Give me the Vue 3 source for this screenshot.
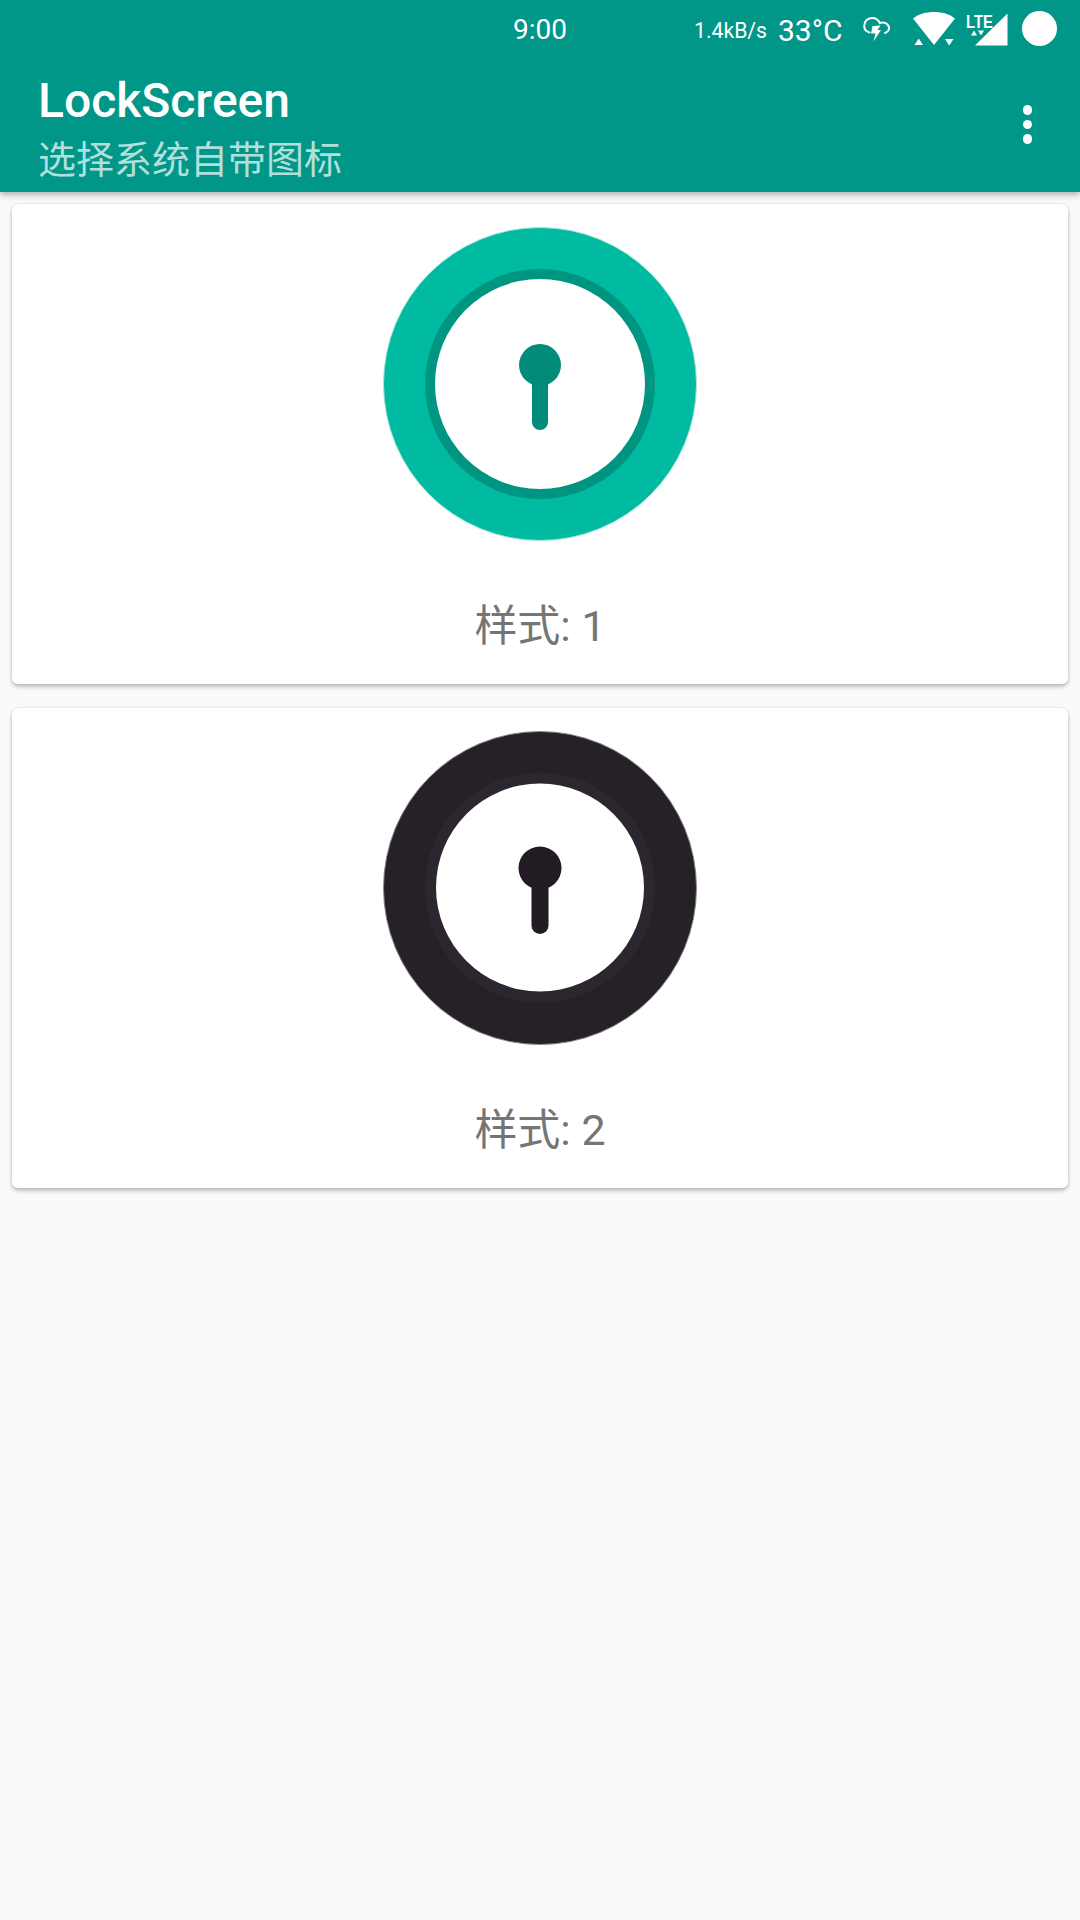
<script setup>
const styles = [
  { id: 1, outer: '#00bba1', edge: '#a8e4da', ring: '#009580', hole: '#008c78', ringR: 115, whiteR: 105, cy: 160, headY: 141, headR: 21, stemW: 16 },
  { id: 2, outer: '#262027', edge: '#8d8790', ring: '#2c272e', hole: '#231c24', ringR: 115, whiteR: 104, cy: 159.5, headY: 140, headR: 21.5, stemW: 17 }
]
</script>

<template>
  <div class="screen">
    <header class="appbar">
      <div class="status">
        <span></span>
        <span class="time">9:00</span>
        <div class="status-right">
          <span class="speed">1.4kB/s</span>
          <span class="temp">33°C</span>
          <svg class="cloud" width="28" height="26" viewBox="0 0 28 26">
            <path d="M6.500 16.500C3 15.500 1.200 13 1.200 10C1.200 5.500 4.500 2 9 2C12.500 2 15.500 4 16.800 7C17.500 6.800 18.500 6.600 19.500 6.600C23.500 6.600 26 9.200 26 12C26 14.500 24.500 16 22 17" fill="none" stroke="#fff" stroke-width="2" stroke-linecap="round" />
            <path d="M17.500 9.500L9.500 10L8 17.500H12.500L10.500 25.500L18 14H14.500Z" fill="#fff" />
          </svg>
          <svg class="wifi" width="46" height="36" viewBox="0 0 46 36">
            <path d="M1 7.500C6.500 3 14 1 22 1C30 1 37.500 3 43 7.500L22 34Z" fill="#fff" />
            <path d="M2.500 34L6.800 27.500L11 34Z" fill="#fff" />
            <path d="M33 28H41.500L37.200 34.500Z" fill="#fff" />
          </svg>
          <div class="cell">
            <svg width="42" height="33" viewBox="0 0 42 33">
              <path d="M41.500 0.500V32.500H9Z" fill="#fff" />
              <path d="M5 22.500L8 17.500L11 22.500Z" fill="#fff" />
              <path d="M12 17.500H18L15 22.500Z" fill="#fff" />
            </svg>
            <span class="lte">LTE</span>
          </div>
          <span class="battery"></span>
        </div>
      </div>
      <div class="toolbar">
        <div class="titles">
          <div class="title">LockScreen</div>
          <div class="subtitle">选择系统自带图标</div>
        </div>
        <div class="more">
          <i></i><i></i><i></i>
        </div>
      </div>
    </header>

    <main class="list">
      <section v-for="s in styles" :key="s.id" class="card">
        <svg class="logo" width="320" height="320" viewBox="0 0 320 320">
          <circle cx="160" cy="160" r="156.500" :fill="s.outer" :stroke="s.edge" stroke-width="1" />
          <circle cx="160" :cy="s.cy" :r="s.ringR" :fill="s.ring" />
          <circle cx="160" :cy="s.cy" :r="s.whiteR" fill="#fff" />
          <circle cx="160" :cy="s.headY" :r="s.headR" :fill="s.hole" />
          <rect :x="160 - s.stemW / 2" :y="s.headY" :width="s.stemW" :height="206 - s.headY" :rx="s.stemW / 2" :fill="s.hole" />
        </svg>
        <div class="label">样式: {{ s.id }}</div>
      </section>
    </main>
  </div>
</template>

<style scoped>
.screen {
  width: 1080px;
  height: 1920px;
  background: #fafafa;
  font-family: Roboto, "Noto Sans CJK SC", sans-serif;
  overflow: hidden;
}
.appbar {
  height: 192px;
  box-sizing: border-box;
  background: #009688;
  color: #fff;
  box-shadow: 0 3px 6px rgba(0, 0, 0, 0.28);
  position: relative;
}
.status {
  height: 60px;
  display: grid;
  grid-template-columns: 1fr auto 1fr;
  align-items: center;
}
.time {
  font-size: 28px;
  line-height: 60px;
}
.status-right {
  display: flex;
  align-items: center;
  justify-content: flex-end;
  padding-right: 23px;
  height: 60px;
}
.speed {
  font-size: 21.2px;
  width: 84px;
}
.temp {
  font-size: 30px;
  width: 85px;
}
.cloud {
  margin-bottom: 2px;
  margin-right: 21px;
}
.wifi {
  margin-right: 8px;
  margin-bottom: 2px;
}
.cell {
  position: relative;
  width: 42px;
  height: 33px;
  margin-right: 14px;
  margin-bottom: 2px;
}
.cell svg {
  display: block;
}
.lte {
  position: absolute;
  left: 0;
  top: 0;
  font-family: "Liberation Sans", sans-serif;
  font-size: 19px;
  line-height: 18px;
  font-weight: 700;
  transform: scaleX(0.78);
  transform-origin: left center;
}
.battery {
  width: 35px;
  height: 35px;
  border-radius: 50%;
  background: #fff;
  margin-bottom: 3px;
}
.toolbar {
  height: 132px;
  display: flex;
  align-items: flex-start;
  justify-content: space-between;
  padding: 13px 48px 0 38px;
}
.title {
  font-size: 48px;
  line-height: 56px;
  font-weight: 500;
}
.subtitle {
  font-size: 38px;
  line-height: 50px;
  margin-top: 6px;
  color: #b2dfdb;
}
.more {
  display: flex;
  flex-direction: column;
  gap: 5px;
  padding-top: 32px;
}
.more i {
  display: block;
  width: 9.500px;
  height: 9.500px;
  border-radius: 50%;
  background: #fff;
}
.list {
  display: flex;
  flex-direction: column;
  gap: 24px;
  padding: 12px;
}
.card {
  height: 480px;
  box-sizing: border-box;
  padding-top: 20px;
  background: #fff;
  border-radius: 6px;
  box-shadow: 0 3px 4px rgba(0, 0, 0, 0.22), 0 0 3px rgba(0, 0, 0, 0.14);
  display: flex;
  flex-direction: column;
  align-items: center;
}
.logo {
  display: block;
  flex: none;
}
.label {
  margin-top: 57px;
  font-size: 43px;
  line-height: 50px;
  color: #757575;
}
</style>
